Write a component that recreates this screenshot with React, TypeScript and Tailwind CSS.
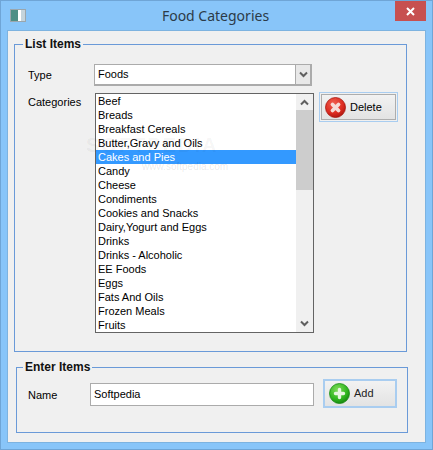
import React from 'react';

const foods = [
  'Beef', 'Breads', 'Breakfast Cereals', 'Butter,Gravy and Oils', 'Cakes and Pies', 'Candy', 'Cheese',
  'Condiments', 'Cookies and Snacks', 'Dairy,Yogurt and Eggs', 'Drinks', 'Drinks - Alcoholic', 'EE Foods',
  'Eggs', 'Fats And Oils', 'Frozen Meals', 'Fruits',
];

const Chevron = ({ up = false }: { up?: boolean }) => (
  <svg width="9" height="7" viewBox="0 0 9 7" className={up ? 'rotate-180' : ''}>
    <path d="M1 1.5 L4.5 5 L8 1.5" fill="none" stroke="#5f5f5f" strokeWidth="2" />
  </svg>
);

const DeleteIcon = () => (
  <svg width="21" height="21" viewBox="0 0 21 21">
    <defs>
      <radialGradient id="red" cx="40%" cy="30%" r="75%">
        <stop offset="0%" stopColor="#f0604f" />
        <stop offset="65%" stopColor="#dc2b20" />
        <stop offset="100%" stopColor="#a81510" />
      </radialGradient>
    </defs>
    <circle cx="10.5" cy="10.5" r="10" fill="url(#red)" stroke="#a8180f" strokeWidth="0.8" />
    <path d="M7.5 7.5 L13.5 13.5 M13.5 7.5 L7.5 13.5" stroke="#f6dcd6" strokeWidth="3.8" strokeLinecap="round" />
  </svg>
);

const AddIcon = () => (
  <svg width="21" height="21" viewBox="0 0 21 21">
    <defs>
      <radialGradient id="green" cx="40%" cy="30%" r="75%">
        <stop offset="0%" stopColor="#7fdc5a" />
        <stop offset="65%" stopColor="#2fb51f" />
        <stop offset="100%" stopColor="#14800f" />
      </radialGradient>
    </defs>
    <circle cx="10.5" cy="10.5" r="10" fill="url(#green)" stroke="#178a12" strokeWidth="0.8" />
    <path d="M10.5 6.5 V14.5 M6.5 10.5 H14.5" stroke="#e6f6e0" strokeWidth="3.4" strokeLinecap="round" />
  </svg>
);

const App: React.FC = () => {
  return (
    <div className="w-[433px] h-[450px] bg-[#88c5f9] border border-[#6fa5d6] overflow-hidden text-[11px] text-black font-['Liberation_Sans',sans-serif]">
      {/* Title bar */}
      <div className="h-[29px] flex items-center relative">
        <div className="ml-[9px] w-[16px] h-[13px] bg-[#e3eaec] border border-[#9aa6ad] flex">
          <div className="w-[7px] bg-[#4f8f86]" />
          <div className="w-[3px] bg-[#fff]" />
          <div className="flex-1 bg-[#c4d4dc]" />
        </div>
        <div className="flex-1 text-center text-[14px] text-[#2c3b48] pr-[27px] font-['Noto_Sans',sans-serif]">Food Categories</div>
        <div className="w-[31px] h-[20px] bg-[#c75050] flex items-center justify-center absolute right-[6px] top-0">
          <svg width="9" height="9" viewBox="0 0 9 9">
            <path d="M1 1 L8 8 M8 1 L1 8" stroke="#fff" strokeWidth="2" />
          </svg>
        </div>
      </div>

      {/* Client area */}
      <div className="mx-[6px] h-[413px] bg-[#f0f0f0] border border-[#7db3e0] pt-[6px] pl-[6px]">
        {/* List Items */}
        <fieldset className="w-[393px] h-[315px] border border-[#6a9ad8] pl-[6px] pt-0">
          <legend className="ml-[2px] px-[2px] font-bold text-[12px] leading-[14px] text-[#111]">List Items</legend>
          <div className="flex items-center mt-[13px] ml-[7px]">
            <span className="w-[66px]">Type</span>
            <div className="w-[218px] h-[22px] bg-white border-2 border-[#ababab] border-l border-t flex items-center">
              <span className="flex-1 pl-[3px]">Foods</span>
              <div className="w-[15px] h-full bg-[#e8e8e8] border-l border-[#ababab] flex items-center justify-center">
                <Chevron />
              </div>
            </div>
          </div>
          <div className="flex mt-[7px] ml-[7px]">
            <span className="w-[67px] pt-[2px] leading-[14px]">Categories</span>
            <div className="w-[219px] h-[240px] bg-white border border-[#646464] flex relative">
              <ul className="flex-1">
                {foods.map((f) => (
                  <li
                    key={f}
                    className={`h-[14px] leading-[14px] pl-[2px] ${f === 'Cakes and Pies' ? 'bg-[#3399ff] text-white' : ''}`}
                  >
                    {f}
                  </li>
                ))}
              </ul>
              <div className="w-[17px] h-full bg-[#f0f0f0] flex flex-col items-center justify-between">
                <div className="h-[17px] flex items-center justify-center"><Chevron up /></div>
                <div className="w-full h-[80px] bg-[#cdcdcd] -mt-[1px] mb-auto" />
                <div className="h-[17px] flex items-center justify-center"><Chevron /></div>
              </div>
              {/* faint site watermark over the list */}
              <div className="absolute left-[-10px] top-[41px] text-[20px] leading-[20px] font-bold tracking-[2px] text-[#000]/5 pointer-events-none">SOFTPEDIA</div>
              <div className="absolute left-[46px] top-[67px] text-[10px] leading-[12px] text-[#000]/10 pointer-events-none">www.softpedia.com</div>
            </div>
            <button className="ml-[5px] -mt-[1px] w-[79px] h-[30px] border border-[#a9cdf0] p-px bg-[#f0f0f0]">
              <span className="w-full h-full border border-[#adadad] bg-gradient-to-b from-[#f2f2f2] to-[#e3e3e3] flex items-center pl-[3px] gap-[4px]">
                <DeleteIcon />
                <span>Delete</span>
              </span>
            </button>
          </div>
        </fieldset>

        {/* Enter Items */}
        <fieldset className="mt-[8px] ml-[2px] w-[392px] h-[73px] border border-[#6a9ad8] pl-[11px]">
          <legend className="ml-[-5px] px-[2px] font-bold text-[12px] leading-[14px] text-[#111]">Enter Items</legend>
          <div className="flex items-center mt-[5px]">
            <span className="w-[62px] pt-[3px]">Name</span>
            <div className="w-[224px] h-[23px] mt-[1px] bg-white border border-[#ababab] pl-[3px] pt-[2px] leading-[16px]">Softpedia</div>
            <button className="ml-[9px] w-[74px] h-[29px] border-2 border-[#a9cdf0] bg-gradient-to-b from-[#f2f2f2] to-[#e3e3e3] flex items-center pl-[4px] gap-[4px] text-[#222]">
              <AddIcon />
              <span>Add</span>
            </button>
          </div>
        </fieldset>
      </div>
    </div>
  );
};

export default App;
